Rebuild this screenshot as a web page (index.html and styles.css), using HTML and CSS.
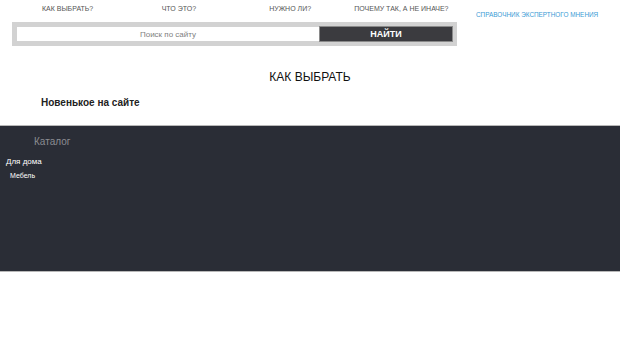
FILE: index.html
```html
<!DOCTYPE html>
<html lang="ru">
<head>
  <meta charset="UTF-8">
  <meta name="viewport" content="width=device-width, initial-scale=1.0">
  <title>Как выбрать</title>
  <link rel="stylesheet" href="styles.css">
</head>
<body>
  <div class="header">
    <div class="header__main">
      <ul class="menu">
        <li class="menu__item"><a class="menu__link" href="#">КАК ВЫБРАТЬ?</a></li>
        <li class="menu__item"><a class="menu__link" href="#">ЧТО ЭТО?</a></li>
        <li class="menu__item"><a class="menu__link" href="#">НУЖНО ЛИ?</a></li>
        <li class="menu__item"><a class="menu__link" href="#">ПОЧЕМУ ТАК, А НЕ ИНАЧЕ?</a></li>
      </ul>
      <form class="search">
        <input class="search__input" type="text" placeholder="Поиск по сайту">
        <button class="search__button" type="submit">НАЙТИ</button>
      </form>
    </div>
    <a class="header__guide" href="#">СПРАВОЧНИК ЭКСПЕРТНОГО МНЕНИЯ</a>
  </div>

  <div class="content">
    <h1 class="content__title">КАК ВЫБРАТЬ</h1>
    <h2 class="content__subtitle">Новенькое на сайте</h2>
  </div>

  <div class="footer">
    <div class="footer__title">Каталог</div>
    <div class="footer__group">Для дома</div>
    <div class="footer__link">Мебель</div>
  </div>
</body>
</html>
```

FILE: styles.css
```css
body {
  margin: 0;
  font-family: "Liberation Sans", Arial, sans-serif;
  background-color: #FFFFFF;
  color: #222222;
}

.header {
  display: flex;
  height: 46px;
}

.header__main {
  width: 445px;
  padding-left: 12px;
}

.menu {
  display: flex;
  margin: 0;
  padding: 0;
  list-style: none;
  height: 22px;
  font-size: 7px;
  line-height: 8px;
}

.menu__item {
  flex: 1;
  text-align: center;
  padding-top: 5px;
}

.menu__link {
  color: #555555;
  text-decoration: none;
}

.search {
  display: flex;
  height: 24px;
  box-sizing: border-box;
  padding: 5px 4px 5px 5px;
  background-color: #D2D2D2;
}

.search__input {
  flex: 1;
  margin: 0;
  border: 0;
  padding: 0;
  font-family: inherit;
  font-size: 8px;
  text-align: center;
  background-color: #FFFFFF;
  outline: none;
}

.search__input::placeholder {
  color: #808080;
}

.search__button {
  width: 134px;
  margin: -1px 0;
  border: 1px solid #8A8A8A;
  padding: 0;
  font-family: inherit;
  font-size: 9px;
  font-weight: bold;
  color: #FFFFFF;
  background-color: #3B3B3F;
}

.header__guide {
  margin-left: 19px;
  padding-top: 11px;
  font-size: 6.4px;
  line-height: 8px;
  color: #3A9BD5;
  text-decoration: none;
}

.content {
  height: 79px;
}

.content__title {
  margin: 0;
  padding-top: 24px;
  font-size: 12px;
  font-weight: normal;
  text-align: center;
  color: #111111;
}

.content__subtitle {
  margin: 0;
  padding: 13px 0 0 41px;
  font-size: 10px;
  font-weight: bold;
  color: #222222;
}

.footer {
  height: 145px;
  border-top: 1px solid #B8B8B8;
  border-bottom: 1px solid #B8B8B8;
  background-color: #2A2D36;
}

.footer__title {
  padding: 10px 0 0 34px;
  font-size: 10px;
  color: #8A8C92;
}

.footer__group {
  padding: 10px 0 0 6px;
  font-size: 8px;
  color: #FFFFFF;
}

.footer__link {
  padding: 6px 0 0 10px;
  font-size: 7px;
  color: #FFFFFF;
}
```
